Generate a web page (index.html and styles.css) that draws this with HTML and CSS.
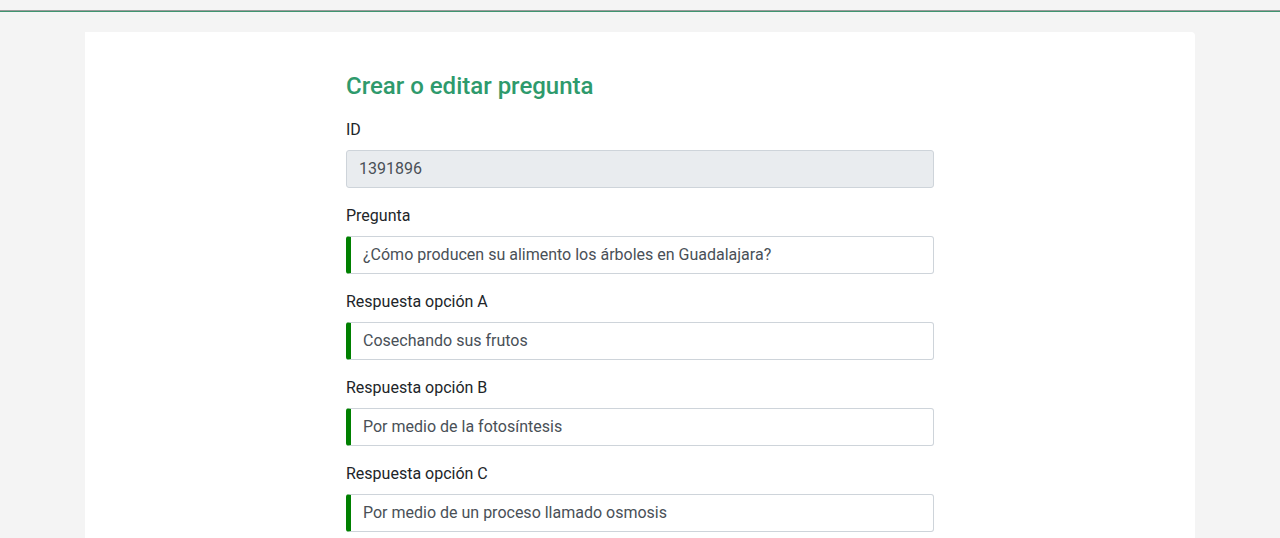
FILE: index.html
```html
<!DOCTYPE html>
<html lang="es">
<head>
    <meta charset="UTF-8">
    <title>Crear o editar pregunta</title>
    <link rel="stylesheet" href="styles.css">
</head>
<body>
<div class="topbar"></div>
<div class="card">
    <form class="form-pregunta">
        <h4 class="titulo">Crear o editar pregunta</h4>

        <div class="grupo">
            <label for="id01">ID</label>
            <input type="text" id="id01" class="campo campo-bloqueado" value="1391896" readonly>
        </div>
        <div class="grupo">
            <label for="pregunta">Pregunta</label>
            <input type="text" id="pregunta" class="campo campo-valido" value="¿Cómo producen su alimento los árboles en Guadalajara?">
        </div>
        <div class="grupo">
            <label for="opcionA">Respuesta opción A</label>
            <input type="text" id="opcionA" class="campo campo-valido" value="Cosechando sus frutos">
        </div>
        <div class="grupo">
            <label for="opcionB">Respuesta opción B</label>
            <input type="text" id="opcionB" class="campo campo-valido" value="Por medio de la fotosíntesis">
        </div>
        <div class="grupo">
            <label for="opcionC">Respuesta opción C</label>
            <input type="text" id="opcionC" class="campo campo-valido" value="Por medio de un proceso llamado osmosis">
        </div>
    </form>
</div>
</body>
</html>
```

FILE: styles.css
```css
body {
    margin: 0;
    background: #f4f4f4;
    font-family: Roboto, 'Liberation Sans', sans-serif;
    color: #212529;
    font-size: 16px;
    line-height: 1.5;
}

.topbar {
    height: 10px;
    border-bottom: 1px solid #9a9a9a;
    box-shadow: 0 1px 0 #3f9470;
}

.card {
    width: 1110px;
    margin: 21px auto 0;
    background: #fff;
    border-radius: 0 4px 0 0;
    padding-top: 40px;
    min-height: 600px;
}

.form-pregunta {
    width: 588px;
    margin: 0 auto;
}

.titulo {
    margin: 0 0 18px;
    font-size: 24px;
    font-weight: 500;
    line-height: 28px;
    color: #2e9a6c;
}

.grupo {
    margin-bottom: 16px;
}

label {
    display: block;
    margin-bottom: 8px;
}

.campo {
    display: block;
    box-sizing: border-box;
    width: 100%;
    height: 38px;
    padding: 5px 12px 7px;
    font-family: inherit;
    font-size: 16px;
    line-height: 1.5;
    color: #495057;
    background: #fff;
    border: 1px solid #ced4da;
    border-radius: 3px;
    outline: none;
}

.campo-bloqueado {
    background: #e9ecef;
}

.campo-valido {
    border-left: 5px solid #008000;
}
```
